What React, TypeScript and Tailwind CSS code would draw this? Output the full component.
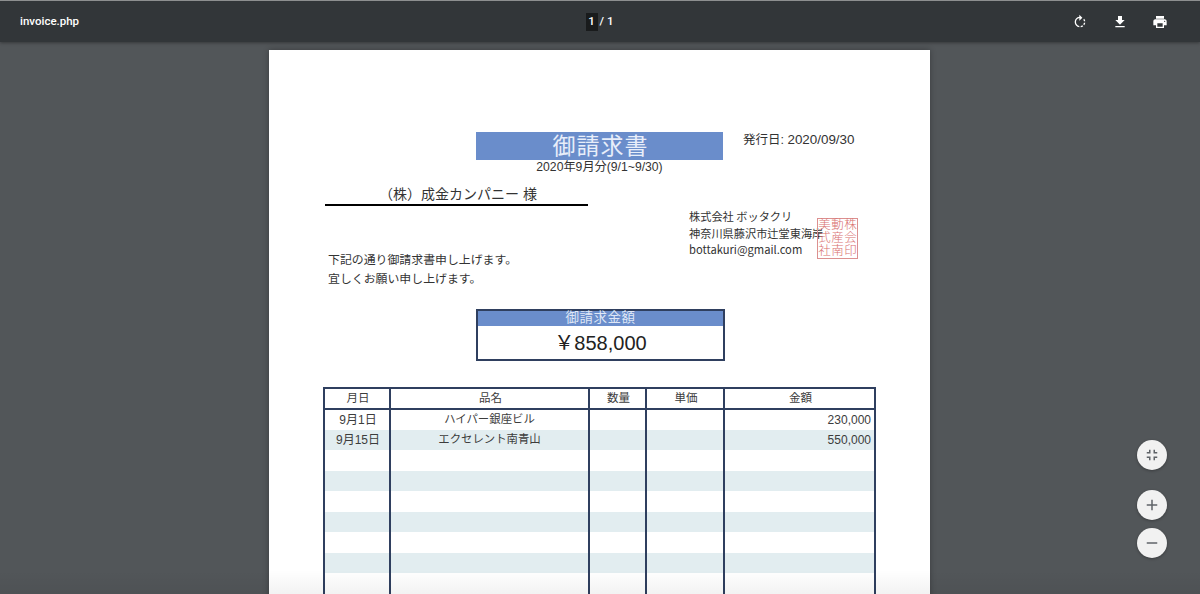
const rows = [
  { date: "9月1日", name: "ハイパー銀座ビル", amount: "230,000" },
  { date: "9月15日", name: "エクセレント南青山", amount: "550,000" },
  { date: "", name: "", amount: "" },
  { date: "", name: "", amount: "" },
  { date: "", name: "", amount: "" },
  { date: "", name: "", amount: "" },
  { date: "", name: "", amount: "" },
  { date: "", name: "", amount: "" },
  { date: "", name: "", amount: "" },
];

const sealChars = ["美", "動", "株", "式", "産", "会", "社", "南", "印"];

function Icon({ d, className }: { d: string; className: string }) {
  return (
    <svg viewBox="0 0 24 24" fill="currentColor" className={className}>
      <path d={d} />
    </svg>
  );
}

function Toolbar() {
  return (
    <div className="flex h-[42px] shrink-0 items-center justify-between border-t border-t-[#8d8f90] bg-[#323639] pl-5 pr-[32px] font-['Roboto',sans-serif] text-white shadow-[0_1px_3px_rgba(0,0,0,0.35)]">
      <div className="w-[211px] text-[11.5px] font-medium">invoice.php</div>
      <div className="flex items-center text-[11.5px] font-medium">
        <span className="flex h-[18px] w-[12px] items-center justify-center bg-[#191b1c]">1</span>
        <span className="ml-[2px]">/ 1</span>
      </div>
      <div className="flex w-[200px] items-center justify-end gap-6">
        <Icon
          className="h-4 w-4"
          d="M15.55 5.55L11 1v3.07C7.06 4.56 4 7.92 4 12s3.05 7.44 7 7.93v-2.02c-2.84-.48-5-2.94-5-5.91s2.16-5.43 5-5.91V10l4.55-4.45zM19.93 11c-.17-1.39-.72-2.73-1.62-3.89l-1.42 1.42c.54.75.88 1.6 1.02 2.47h2.02zM13 17.9v2.02c1.39-.17 2.74-.71 3.9-1.61l-1.44-1.44c-.75.54-1.59.89-2.46 1.03zm3.89-2.42l1.42 1.41c.9-1.16 1.45-2.5 1.62-3.89h-2.02c-.14.87-.48 1.72-1.02 2.48z"
        />
        <Icon className="h-4 w-4" d="M19 9h-4V3H9v6H5l7 7 7-7zM5 18v2h14v-2H5z" />
        <Icon
          className="h-4 w-4"
          d="M19 8H5c-1.66 0-3 1.34-3 3v6h4v4h12v-4h4v-6c0-1.66-1.34-3-3-3zm-3 11H8v-5h8v5zm3-7c-.55 0-1-.45-1-1s.45-1 1-1 1 .45 1 1-.45 1-1 1zm-1-9H6v4h12V3z"
        />
      </div>
    </div>
  );
}

function Seal() {
  return (
    <div className="absolute left-[548px] top-[168px] grid h-[41px] w-[41px] grid-cols-3 grid-rows-3 border border-[#dc9090] text-center text-[12.5px] leading-[13px] font-light text-[#d9706f]">
      {sealChars.map((c, i) => (
        <span key={i}>{c}</span>
      ))}
    </div>
  );
}

function InvoiceTable() {
  const th = "border-x-2 border-b-2 border-[#2f3f5f] pl-[2px] text-[11.5px] font-normal";
  const td = "border-x-2 border-[#2f3f5f]";
  return (
    <table className="ml-[54px] mt-[26px] w-[553px] table-fixed border-collapse text-[#3c3c3c]">
      <colgroup>
        <col className="w-[66px]" />
        <col className="w-[199px]" />
        <col className="w-[57px]" />
        <col className="w-[78px]" />
        <col className="w-[151px]" />
      </colgroup>
      <thead>
        <tr className="h-[21px] border-t-2 border-[#2f3f5f]">
          <th className={th}>月日</th>
          <th className={th}>品名</th>
          <th className={th}>数量</th>
          <th className={th}>単価</th>
          <th className={th}>金額</th>
        </tr>
      </thead>
      <tbody>
        {rows.map((r, i) => (
          <tr key={i} className={i % 2 === 1 ? "h-[20.5px] bg-[#e2edf0]" : "h-[20.5px] bg-white"}>
            <td className={`${td} pl-[2px] text-center text-[12px]`}>{r.date}</td>
            <td className={`${td} text-center text-[11.4px]`}>{r.name}</td>
            <td className={td}></td>
            <td className={td}></td>
            <td className={`${td} pr-[3px] text-right text-[12px]`}>{r.amount}</td>
          </tr>
        ))}
      </tbody>
    </table>
  );
}

function Paper() {
  return (
    <div className="relative ml-[269px] mt-2 h-[600px] w-[661px] shrink-0 bg-white pt-[82px] font-['Liberation_Sans','Noto_Sans_CJK_JP',sans-serif] text-[#333] shadow-[0_0_6px_rgba(0,0,0,0.3)]">
      <div className="flex items-start">
        <div className="ml-[207px] flex h-[28px] w-[247px] items-center justify-center bg-[#6a8dcb] pl-[2px] text-[23px] tracking-[1px] text-[#e8eefa]">
          御請求書
        </div>
        <div className="ml-[20px] text-[12.5px] leading-[15px]">
          発行日: <span className="text-[13.4px]">2020/09/30</span>
        </div>
      </div>
      <div className="ml-[207px] w-[247px] text-center text-[12.2px] leading-[15px]">2020年9月分(9/1~9/30)</div>

      <div className="ml-[56px] mt-[10px] h-[21px] w-[263px] border-b-2 border-black pl-[54px] text-[14px] leading-[19px]">
        （株）成金カンパニー 様
      </div>

      <div className="ml-[59px] mt-[45px] text-[11.9px] leading-[19px]">
        <div>下記の通り御請求書申し上げます。</div>
        <div>宜しくお願い申し上げます。</div>
      </div>

      {/* 発行元 */}
      <div className="absolute left-[420px] top-[158px] font-['Noto_Sans_CJK_JP',sans-serif] text-[11.2px] leading-[16.5px] text-[#333]">
        <div>株式会社 ボッタクリ</div>
        <div>神奈川県藤沢市辻堂東海岸</div>
        <div>bottakuri@gmail.com</div>
      </div>
      <Seal />

      <div className="ml-[207px] mt-[20px] h-[52px] w-[249px] border-2 border-[#2f3f5f]">
        <div className="flex h-[15px] items-center justify-center bg-[#6a8dcb] text-[13.5px] tracking-[0.5px] text-[#dfe7f6]">
          御請求金額
        </div>
        <div className="flex h-[33px] items-center justify-center text-[20px] text-[#222]">￥858,000</div>
      </div>

      <InvoiceTable />
    </div>
  );
}

function ZoomButton({ d, className }: { d: string; className: string }) {
  return (
    <div className={`flex h-[30px] w-[30px] items-center justify-center rounded-full bg-[#f1f1f1] text-[#5f6368] shadow-[0_1px_3px_rgba(0,0,0,0.3)] ${className}`}>
      <Icon className="h-[18px] w-[18px]" d={d} />
    </div>
  );
}

export default function App() {
  return (
    <div className="relative flex h-[594px] w-[1200px] flex-col overflow-hidden bg-[#525659]">
      <Toolbar />
      <Paper />
      <div className="pointer-events-none absolute inset-x-0 bottom-0 h-[24px] bg-gradient-to-b from-transparent to-black/5" />
      <div className="absolute right-[33px] top-[440px] flex flex-col">
        <ZoomButton className="mb-5" d="M5 16h3v3h2v-5H5v2zm3-8H5v2h5V5H8v3zm6 11h2v-3h3v-2h-5v5zm2-11V5h-2v5h5V8h-3z" />
        <ZoomButton className="mb-2" d="M19 13h-6v6h-2v-6H5v-2h6V5h2v6h6v2z" />
        <ZoomButton className="" d="M19 13H5v-2h14v2z" />
      </div>
    </div>
  );
}
